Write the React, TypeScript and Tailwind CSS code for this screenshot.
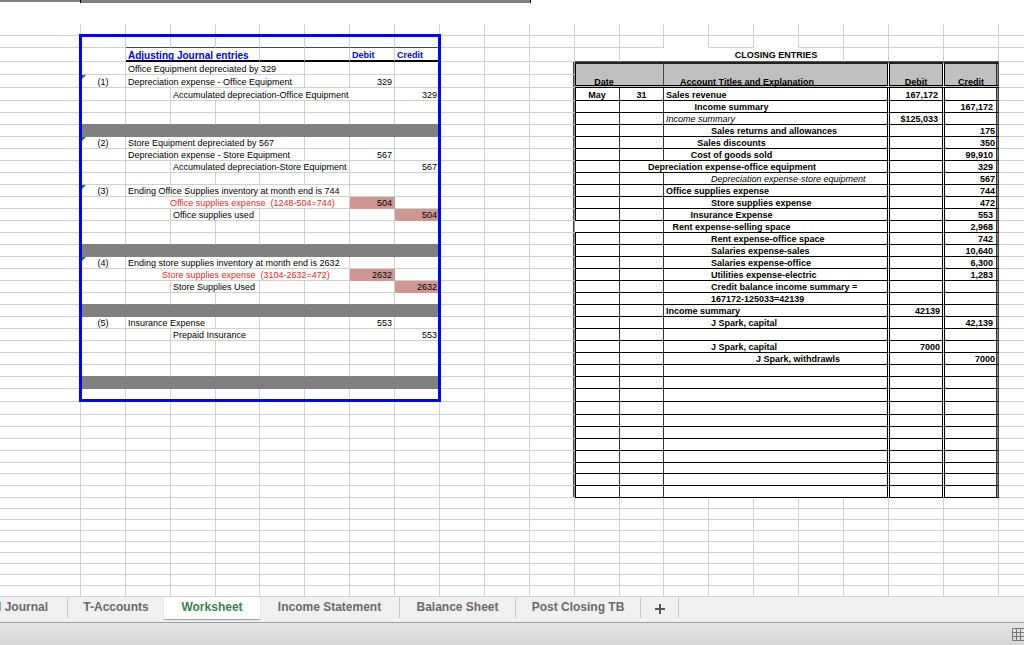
import { twMerge } from "tailwind-merge";

type Cell = {
  col: number;
  span?: number;
  rows?: number;
  text?: string;
  cls?: string;
  flag?: boolean;
  head?: boolean;
};

type Adjusting = {
  label?: string;
  flag?: boolean;
  text?: string;
  col?: number;
  span?: number;
  cls?: string;
  debit?: string;
  credit?: string;
  pink?: boolean;
  bar?: boolean;
};

type Closing = {
  month?: string;
  day?: string;
  text?: string;
  align?: "left" | "center" | "indent" | "indent2" | "wide";
  italic?: boolean;
  debit?: string;
  credit?: string;
  // plain numbers sit closer to the cell edge than accounting-formatted ones
  plain?: boolean;
};

const COLS = 22;

const colWidths = [
  "w-[81px]", "w-[45px]", "w-[45px]", "w-[45px]", "w-[44px]", "w-[45px]", "w-[45px]",
  "w-[45px]", "w-[45px]", "w-[45px]", "w-[45px]", "w-[45px]", "w-[45px]", "w-[44px]",
  "w-[45px]", "w-[45px]", "w-[45px]", "w-[45px]", "w-[45px]", "w-[55px]", "w-[55px]", "",
];

const FIRST_ENTRY = 4;
const adjusting: Adjusting[] = [
  { text: "Office Equipment depreciated by 329", span: 4 },
  { label: "(1)", flag: true, text: "Depreciation expense - Office Equipment", span: 4, debit: "329" },
  { text: "Accumulated depreciation-Office Equipment", col: 3, span: 5, credit: "329" },
  {},
  {},
  { bar: true },
  { label: "(2)", flag: true, text: "Store Equipment depreciated by 567", span: 4 },
  { text: "Depreciation expense - Store Equipment", span: 4, debit: "567" },
  { text: "Accumulated depreciation-Store Equipment", col: 3, span: 4, credit: "567" },
  {},
  { label: "(3)", flag: true, text: "Ending Office Supplies inventory at month end is 744", span: 5 },
  { text: "Office supplies expense  (1248-504=744)", span: 5, cls: "pl-11 text-[#e8291c]", debit: "504", pink: true },
  { text: "Office supplies used", col: 3, span: 2, credit: "504", pink: true },
  {},
  {},
  { bar: true },
  { label: "(4)", flag: true, text: "Ending store supplies inventory at month end is 2632", span: 5 },
  { text: "Store supplies expense  (3104-2632=472)", span: 5, cls: "pl-9 text-[#e8291c]", debit: "2632", pink: true },
  { text: "Store Supplies Used", col: 3, span: 2, credit: "2632", pink: true },
  {},
  { bar: true },
  { label: "(5)", text: "Insurance Expense", span: 2, debit: "553" },
  { text: "Prepaid Insurance", col: 3, span: 2, credit: "553" },
  {},
  {},
  {},
  { bar: true },
  {},
];

const FIRST_CLOSING = 6;
const LAST_CLOSING = 39;
const closing: Closing[] = [
  { month: "May", day: "31", text: "Sales revenue", debit: "167,172" },
  { text: "Income summary", align: "center", credit: "167,172" },
  { text: "Income summary", italic: true, debit: "$125,033" },
  { text: "Sales returns and allowances", align: "indent", credit: "175", plain: true },
  { text: "Sales discounts", align: "center", credit: "350", plain: true },
  { text: "Cost of goods sold", align: "center", credit: "99,910" },
  { text: "Depreciation expense-office equipment", align: "wide", credit: "329" },
  { text: "Depreciation expense-store equipment", align: "indent", italic: true, credit: "567", plain: true },
  { text: "Office supplies expense", credit: "744", plain: true },
  { text: "Store supplies expense", align: "indent", credit: "472", plain: true },
  { text: "Insurance Expense", align: "center", credit: "553" },
  { text: "Rent expense-selling space", align: "center", credit: "2,968" },
  { text: "Rent expense-office space", align: "indent", credit: "742" },
  { text: "Salaries expense-sales", align: "indent", credit: "10,640" },
  { text: "Salaries expense-office", align: "indent", credit: "6,300" },
  { text: "Utilities expense-electric", align: "indent", credit: "1,283" },
  { text: "Credit balance income summary =", align: "indent" },
  { text: "167172-125033=42139", align: "indent" },
  { text: "Income summary", debit: "42139", plain: true },
  { text: "J Spark, capital", align: "indent", credit: "42,139" },
  {},
  { text: "J Spark, capital", align: "indent", debit: "7000", plain: true },
  { text: "J Spark, withdrawls", align: "indent2", credit: "7000", plain: true },
];

const rowHeight = (r: number) => {
  if (r === 3) return "h-[14px]";
  if ([4, 5, 6, 31, 32].includes(r)) return "h-[13px]";
  if (r === 37 || r >= 40) return "h-[11px]";
  return "h-[12px]";
};

// The double rules are a pale border between two inset shadows
const dateEdge = "shadow-[inset_1px_0_#000]";
const outerLeft = "border-r-[#999] shadow-[inset_-1px_0_#444]";
const beforeRule = "border-r-white shadow-[inset_-1px_0_#000]";
const betweenRules = "border-r-white shadow-[inset_1px_0_#000,inset_-1px_0_#000]";
const lastRule = "border-r-[#444] shadow-[inset_1px_0_#000,inset_-1px_0_#8c8c8c,inset_-2px_0_#333]";

const adjustingCells = (r: number): Cell[] => {
  if (r === 2) {
    return [2, 3, 4, 5, 6, 7, 8].map((col) => ({ col, cls: "border-b-[#444]" }));
  }
  if (r === 3) {
    const head = "border-b-2 border-b-black text-left font-bold text-[#00f]";
    return [
      { col: 2, span: 3, text: "Adjusting Journal entries", cls: `${head} text-[10px]`, head: true },
      { col: 5, cls: head },
      { col: 6, cls: head },
      { col: 7, text: "Debit", cls: head, head: true },
      { col: 8, text: "Credit", cls: head, head: true },
    ];
  }
  const entry = adjusting[r - FIRST_ENTRY];
  if (!entry) return [];
  if (entry.bar) {
    return [{ col: 1, span: 8, cls: "border-[#808080] bg-[#808080]" }];
  }
  if (adjusting[r - FIRST_ENTRY + 1]?.bar) {
    return [1, 2, 3, 4, 5, 6, 7, 8].map((col) => ({ col, cls: "border-b-[#808080]" }));
  }
  const cells: Cell[] = [];
  if (entry.label) cells.push({ col: 1, text: entry.label, cls: "text-center", flag: entry.flag });
  if (entry.text) cells.push({ col: entry.col ?? 2, span: entry.span, text: entry.text, cls: entry.cls });
  const fill = entry.pink ? "border-[#cf9792] bg-[#cf9792]" : "";
  if (entry.debit) cells.push({ col: 7, text: entry.debit, cls: `text-right ${fill}` });
  if (entry.credit) cells.push({ col: 8, text: entry.credit, cls: `text-right ${fill}` });
  return cells;
};

const closingCells = (r: number): Cell[] => {
  if (r === 2) {
    return [14, 16].map((col) => ({ col, cls: "border-b-white" }));
  }
  if (r === 3) {
    const top = "border-b-[#555]";
    return [
      { col: 12, cls: top },
      { col: 13, cls: `${top} border-r-0` },
      { col: 14, cls: `${top} border-r-0` },
      { col: 15, span: 3, text: "CLOSING ENTRIES", cls: `${top} text-center font-bold leading-[11px]` },
      { col: 18, cls: top },
      { col: 19, cls: top },
      { col: 20, cls: top },
    ];
  }
  if (r === 4) {
    const head =
      "border-t-2 border-t-[#222] border-b-3 border-b-black border-double bg-[#c0c0c0] text-center align-bottom font-bold leading-[6px]";
    return [
      { col: 11, cls: outerLeft },
      { col: 12, span: 2, rows: 2, text: "Date", cls: `${head} pr-8 border-r-[#444] ${dateEdge}`, head: true },
      { col: 14, span: 5, rows: 2, text: "Account Titles and Explanation", cls: `${head} pr-15 ${beforeRule}`, head: true },
      { col: 19, rows: 2, text: "Debit", cls: `${head} ${betweenRules}`, head: true },
      { col: 20, rows: 2, text: "Credit", cls: `${head} ${lastRule}`, head: true },
    ];
  }
  if (r === 5) return [{ col: 11, cls: outerLeft }];
  if (r < FIRST_CLOSING || r > LAST_CLOSING) return [];

  const entry = closing[r - FIRST_CLOSING] ?? {};
  const line = "border-b-black border-r-[#333] font-bold";
  const open = "border-b-black border-r-0";
  const title = entry.italic ? `${line} font-normal italic` : line;
  const number = entry.plain ? "text-right pr-[3px]" : "text-right pr-[5px]";
  const cells: Cell[] = [
    { col: 11, cls: outerLeft },
    { col: 12, text: entry.month, cls: twMerge(line, "text-center", r !== 17 && dateEdge) },
  ];
  if (entry.align !== "wide") cells.push({ col: 13, text: entry.day, cls: `${line} text-center` });

  if (entry.align === "wide") {
    cells.push({ col: 13, span: 5, text: entry.text, cls: `${title} px-0 text-center border-r-0` });
    cells.push({ col: 18, cls: `${line} ${beforeRule}` });
  } else if (entry.align === "center") {
    cells.push({ col: 14, span: 3, text: entry.text, cls: `${title} px-0 text-center border-r-0` });
    cells.push({ col: 17, span: 2, cls: `${line} ${beforeRule}` });
  } else if (entry.align === "indent") {
    cells.push({ col: 14, cls: open });
    cells.push({ col: 15, span: 4, text: entry.text, cls: `${title} ${beforeRule}` });
  } else if (entry.align === "indent2") {
    cells.push({ col: 14, span: 2, cls: open });
    cells.push({ col: 16, span: 3, text: entry.text, cls: `${title} ${beforeRule}` });
  } else {
    cells.push({ col: 14, span: 5, text: entry.text, cls: `${title} ${beforeRule}` });
  }
  cells.push({ col: 19, text: entry.debit, cls: `${line} ${number} ${betweenRules}` });
  cells.push({ col: 20, text: entry.credit, cls: `${line} ${number} ${lastRule}` });
  return cells;
};

const buildRow = (r: number): Cell[] => {
  const defined = [...adjustingCells(r), ...closingCells(r), { col: COLS - 1, cls: "border-r-0" }];
  const row: Cell[] = [];
  let col = 0;
  while (col < COLS) {
    // columns 12-20 are taken by the header cells of the row above
    if (r === 5 && col === 12) {
      col = 21;
      continue;
    }
    const cell: Cell = defined.find((c) => c.col === col) ?? { col };
    row.push(cell);
    col += cell.span ?? 1;
  }
  return row;
};

const SheetCell = ({ cell }: { cell: Cell }) => {
  const Tag = cell.head ? "th" : "td";
  return (
    <Tag
      colSpan={cell.span}
      rowSpan={cell.rows}
      className={twMerge(
        "relative border-r border-b border-[#d0d0d0] px-[2px] py-0 align-bottom font-normal whitespace-pre",
        cell.cls
      )}
    >
      {cell.flag && (
        <svg viewBox="0 0 4 4" className="absolute top-0 left-px size-1">
          <path d="M0 0h4L0 4z" fill="#2c7a1e" />
        </svg>
      )}
      {cell.text}
    </Tag>
  );
};

const tabs = [
  { name: "al Journal", width: "w-[68px] justify-end pr-[19px]" },
  { name: "T-Accounts", width: "w-24 justify-center" },
  { name: "Worksheet", width: "w-24 justify-center", active: true },
  { name: "Income Statement", width: "w-[140px] justify-center" },
  { name: "Balance Sheet", width: "w-[116px] justify-center" },
  { name: "Post Closing TB", width: "w-[125px] justify-center" },
];

const SheetTabs = () => (
  <nav className="flex h-[26px] items-start border-b border-[#a0a0a0] bg-[#f0f0f0] font-['Liberation_Sans',Arial,sans-serif] text-[12px] font-bold text-[#6a6a6a]">
    {tabs.map((tab) => (
      <button
        key={tab.name}
        type="button"
        className={twMerge(
          "flex h-[21px] shrink-0 items-center border-r border-[#c8c8c8] pb-[2px] whitespace-nowrap",
          tab.width,
          tab.active && "h-[22px] rounded-b-xs border-r-0 bg-white pb-[3px] text-[#3b8350] shadow-[0_1px_1px_#999]",
          tab.name === "T-Accounts" && "border-r-0"
        )}
      >
        {tab.name}
      </button>
    ))}
    <button
      type="button"
      aria-label="Add sheet"
      className="flex h-[21px] w-[38px] shrink-0 items-center justify-center border-r border-[#c8c8c8] pt-[2px]"
    >
      <svg viewBox="0 0 10 10" className="size-[10px]" stroke="#555" strokeWidth="2">
        <path d="M5 0v10M0 5h10" />
      </svg>
    </button>
  </nav>
);

const App = () => {
  const rows = Array.from({ length: 48 }, (_, i) => i + 1);

  return (
    <div className="min-h-screen overflow-hidden bg-white">
      <div className="flex h-6 items-start">
        <div className="h-[2px] w-20 bg-[#808080]" />
        <div className="h-[3px] w-[451px] border-x border-black bg-[#808080]" />
      </div>

      <main className="relative">
        <table className="w-full table-fixed border-separate border-spacing-0 font-['Liberation_Sans',Arial,sans-serif] text-[9px] leading-[9px] text-black">
          <colgroup>
            {colWidths.map((width, i) => (
              <col key={i} className={width} />
            ))}
          </colgroup>
          <tbody>
            {rows.map((r) => (
              <tr key={r} className={rowHeight(r)}>
                {buildRow(r).map((cell) => (
                  <SheetCell key={cell.col} cell={cell} />
                ))}
              </tr>
            ))}
          </tbody>
        </table>
        {/* outline round the adjusting entries */}
        <div className="pointer-events-none absolute top-[10px] left-[79px] h-[368px] w-[362px] border-3 border-[#00f]" />
      </main>

      <SheetTabs />

      <footer className="flex h-[22px] items-center justify-end overflow-hidden bg-linear-to-b from-[#e4e4e4] to-[#d6d6d6]">
        <svg viewBox="0 0 12 13" className="h-[13px] w-3" fill="none" stroke="#777">
          <path d="M12 .5H.5v12H12M0 4.5h12M0 8.5h12M4.5 0v13M8.5 0v13" />
        </svg>
      </footer>
    </div>
  );
};

export default App;
